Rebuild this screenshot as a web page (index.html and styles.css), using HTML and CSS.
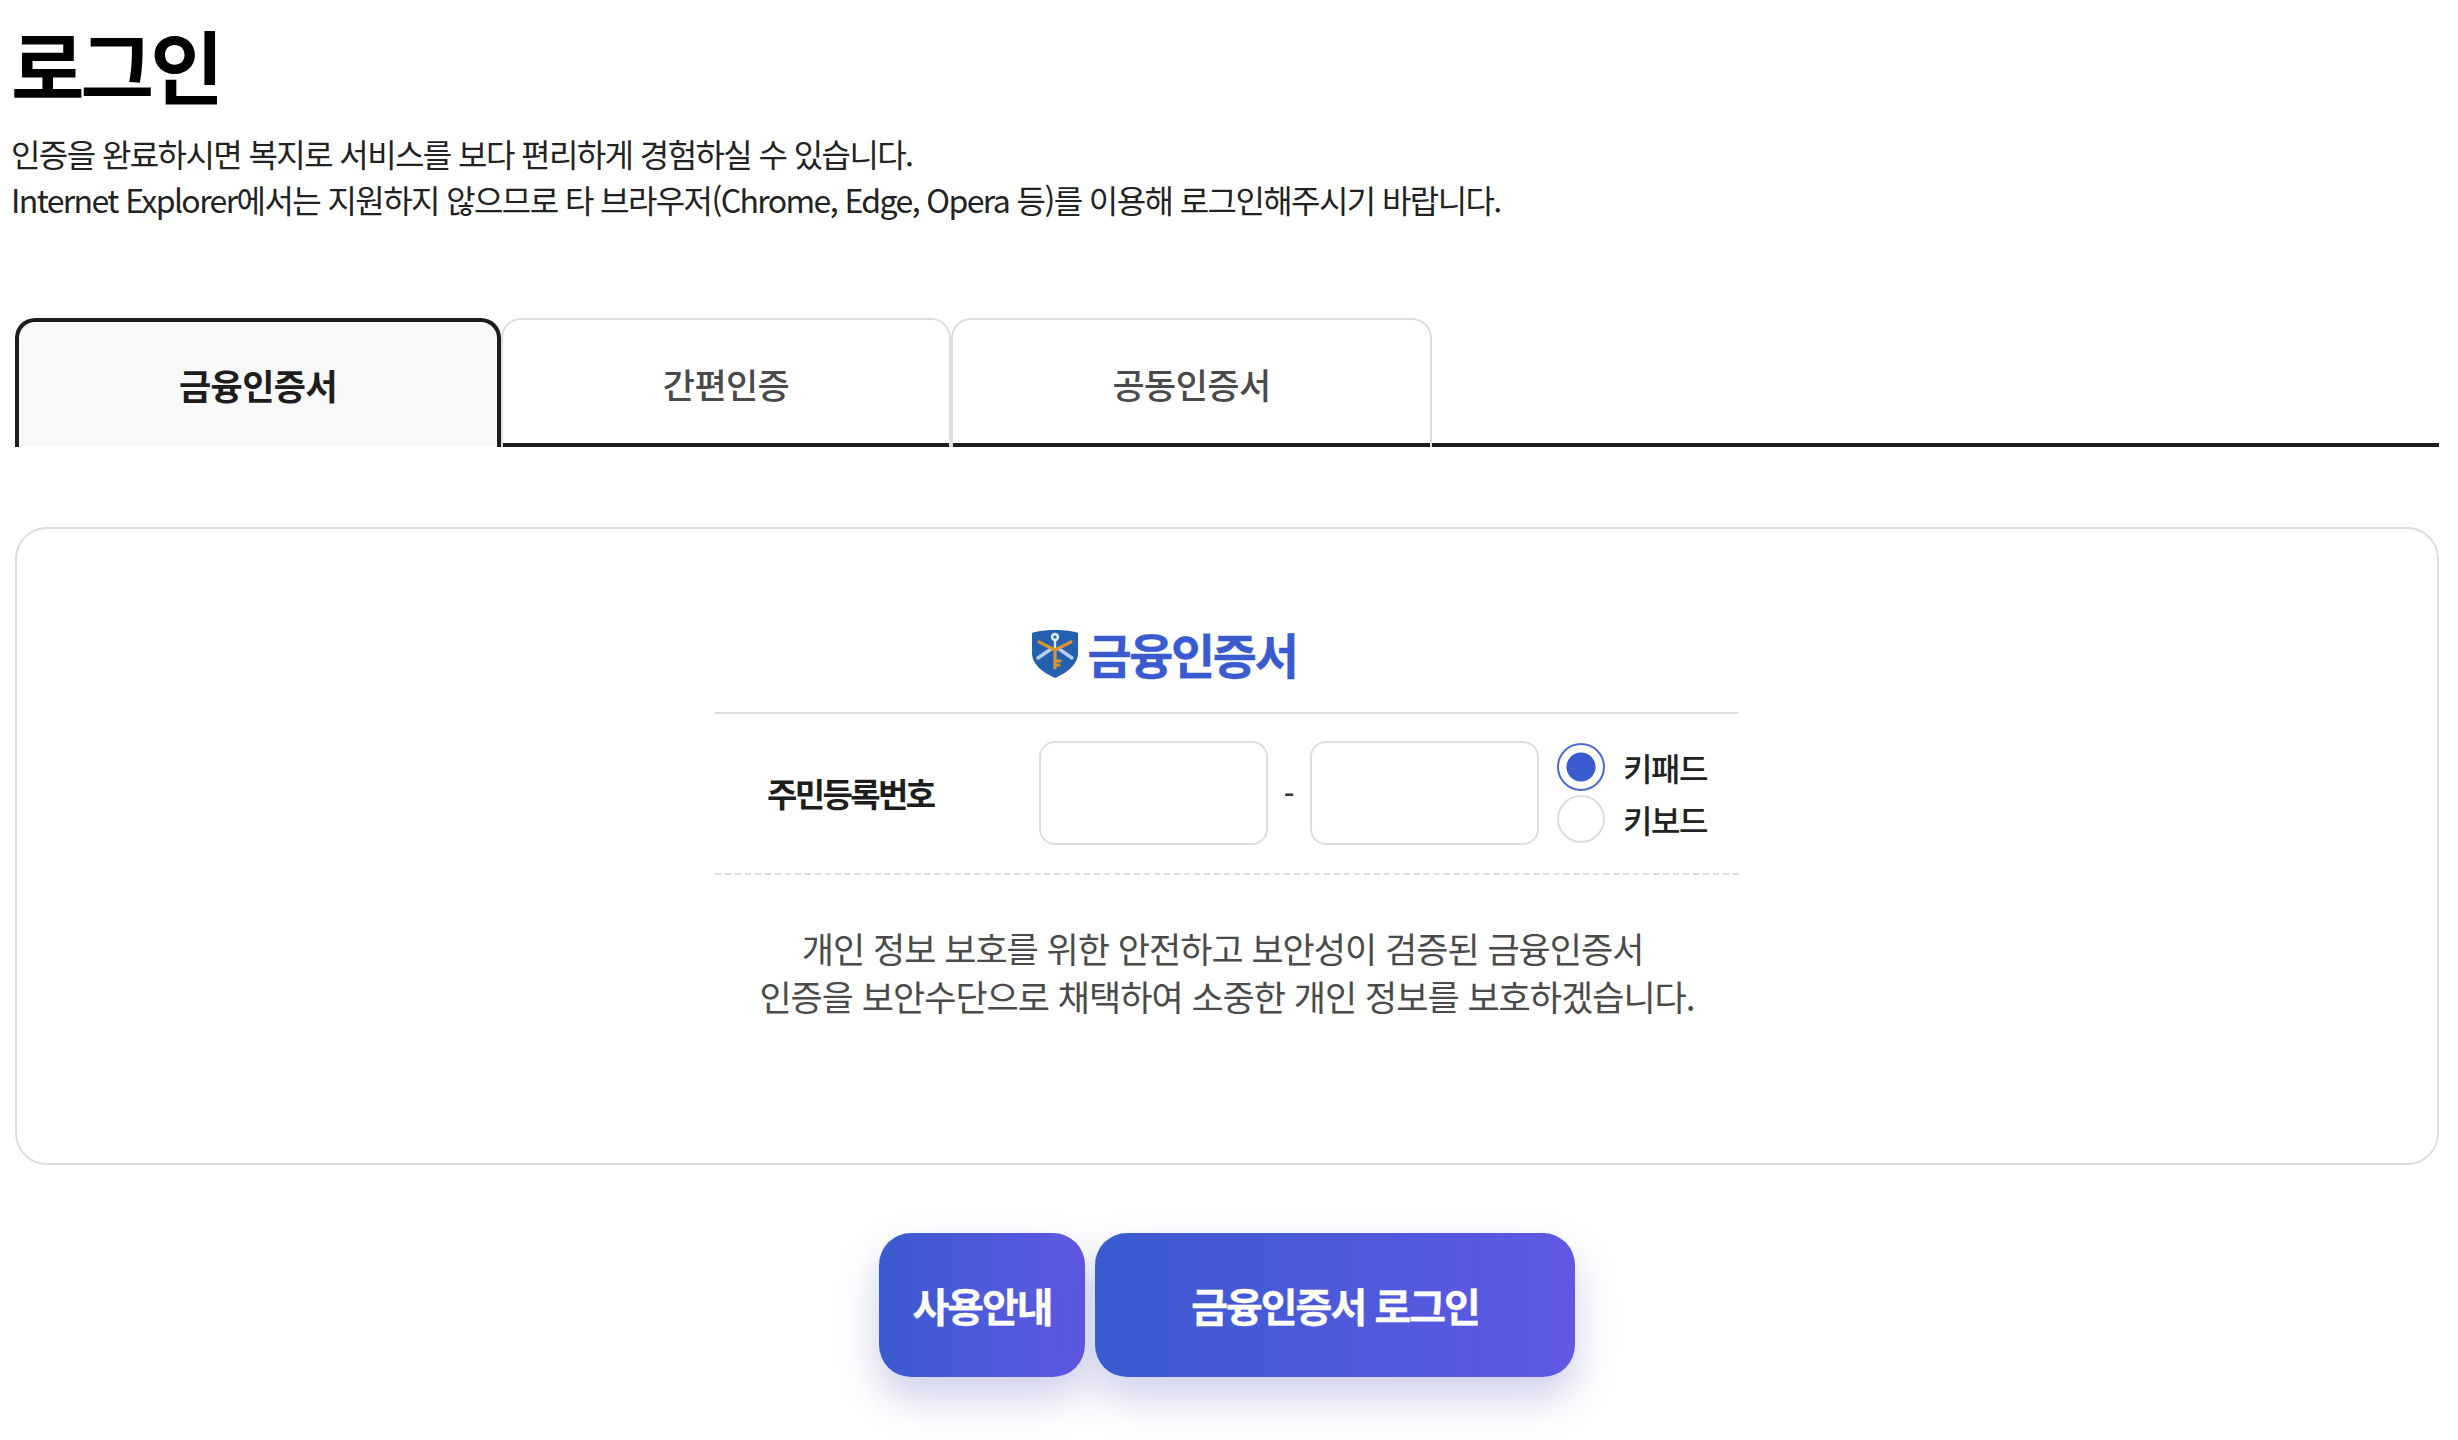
FILE: index.html
```html
<!DOCTYPE html>
<html lang="ko">
<head>
    <meta charset="UTF-8">
    <meta name="viewport" content="width=device-width, initial-scale=1.0">
    <title>로그인</title>
    <link rel="stylesheet" href="styles.css">
</head>
<body>
    <div class="container">
        <div class="intro">
            <h1>로그인</h1>
            <p>인증을 완료하시면 복지로 서비스를 보다 편리하게 경험하실 수 있습니다.<br>Internet Explorer에서는 지원하지 않으므로 타 브라우저(Chrome, Edge, Opera 등)를 이용해 로그인해주시기 바랍니다.</p>
        </div>

        <ul class="tabs">
            <li class="tab tab-first active">금융인증서</li>
            <li class="tab tab-second">간편인증</li>
            <li class="tab tab-third">공동인증서</li>
        </ul>

        <div class="panel">
            <div class="panel-title">
                <svg class="shield" viewBox="0 0 48 50" aria-hidden="true">
                    <path d="M1 5 C10 1 38 1 47 5 L47 25 C47 37 35 45 24 50 C13 45 1 37 1 25 Z" fill="#2460ad"/>
                    <path d="M7 30 L20 21 M41 30 L28 21" stroke="#b9d0ea" stroke-width="3.4" stroke-linecap="round"/>
                    <circle cx="24" cy="9" r="4.2" fill="#dbe7f4"/>
                    <circle cx="24" cy="9" r="1.6" fill="#2460ad"/>
                    <path d="M24 13 L24 21" stroke="#dbe7f4" stroke-width="2.4"/>
                    <path d="M8 14 L24 22 L40 14 M24 22 L24 40 M24 33 L29 33 M24 37 L28 37" fill="none" stroke="#d9952f" stroke-width="3.2" stroke-linecap="round"/>
                </svg>
                <span>금융인증서</span>
            </div>

            <div class="id-row">
                <label class="id-label" for="idFront">주민등록번호</label>
                <div class="id-fields">
                    <input type="text" id="idFront" class="id-input">
                    <span class="id-dash">-</span>
                    <input type="password" id="idBack" class="id-input">
                </div>
                <div class="input-type">
                    <label class="radio-item"><span class="radio checked"></span>키패드</label>
                    <label class="radio-item"><span class="radio"></span>키보드</label>
                </div>
            </div>

            <p class="panel-text">개인 정보 보호를 위한 안전하고 보안성이 검증된 금융인증서&nbsp;<br>인증을 보안수단으로 채택하여 소중한 개인 정보를 보호하겠습니다.</p>
        </div>

        <div class="buttons">
            <button type="button" class="btn btn-guide">사용안내</button>
            <button type="button" class="btn btn-login">금융인증서 로그인</button>
        </div>
    </div>
</body>
</html>
```

FILE: styles.css
```css
* {
    box-sizing: border-box;
}
body {
    margin: 0;
    background: #fff;
    color: #1d1d1d;
    font-family: "Noto Sans CJK KR", "Noto Sans", sans-serif;
}
.container {
    padding: 0 19px 64px 15px;
}
.intro {
    margin-left: -4px;
}
h1 {
    margin: 0;
    padding-top: 7px;
    font-size: 80px;
    line-height: 112px;
    font-weight: 700;
    letter-spacing: -4px;
    color: #000;
}
.intro p {
    margin: 11px 0 0;
    font-size: 32px;
    line-height: 46px;
    letter-spacing: -1.6px;
    color: #222;
}
.tabs {
    display: flex;
    margin: 96px 0 0;
    padding: 0;
    height: 129px;
    list-style: none;
    border-bottom: 4px solid #1d1d1d;
}
.tab {
    display: flex;
    justify-content: center;
    align-items: center;
    height: 129px;
    border: 2px solid #ddd;
    border-bottom: none;
    border-radius: 20px 20px 0 0;
    font-size: 35px;
    font-weight: 500;
    letter-spacing: -0.6px;
    color: #4a4a4a;
}
.tab-first {
    width: 486px;
}
.tab-second {
    width: 450px;
}
.tab-third {
    width: 481px;
}
.tab.active {
    border: 4px solid #1d1d1d;
    border-bottom: none;
    background: #f8f8f8;
    font-weight: 700;
    color: #1d1d1d;
}
.panel {
    margin-top: 80px;
    height: 638px;
    padding-top: 97px;
    border: 2px solid #ddd;
    border-radius: 32px;
}
.panel-title {
    display: flex;
    justify-content: center;
    align-items: center;
    gap: 9px;
    margin: 0 auto;
    width: 1024px;
    height: 88px;
    padding: 0 127px 32px 0;
    border-bottom: 2px solid #ddd;
    color: #3a5bcf;
    font-size: 48px;
    font-weight: 700;
    letter-spacing: -2.4px;
    -webkit-text-stroke: 0.4px #3a5bcf;
}
.shield {
    width: 48px;
    height: 50px;
}
.id-row {
    display: flex;
    align-items: center;
    margin: 0 auto;
    width: 1024px;
    height: 161px;
    padding-bottom: 2px;
    border-bottom: 2px dashed #ddd;
}
.id-label {
    width: 324px;
    padding-left: 52px;
    font-size: 33px;
    font-weight: 700;
    letter-spacing: -2.6px;
    color: #1d1d1d;
}
.id-fields {
    display: flex;
    align-items: center;
}
.id-input {
    width: 229px;
    height: 104px;
    border: 2px solid #ddd;
    border-radius: 16px;
    background: #fff;
    outline: none;
}
.id-dash {
    width: 42px;
    text-align: center;
    font-size: 30px;
    font-weight: 500;
    color: #333;
}
.input-type {
    display: flex;
    flex-direction: column;
    gap: 3px;
    margin-left: 18px;
}
.radio-item {
    display: flex;
    align-items: center;
    gap: 18px;
    height: 49px;
    font-size: 32px;
    font-weight: 500;
    letter-spacing: -1.4px;
    color: #222;
}
.radio {
    width: 48px;
    height: 48px;
    border: 2px solid #ddd;
    border-radius: 50%;
    background: #fff;
}
.radio.checked {
    border: 2px solid #4d6bd6;
    background: radial-gradient(circle, #3a5bcf 0, #3a5bcf 14px, #fff 15px);
}
.panel-text {
    margin: 49px 0 0;
    text-align: center;
    font-size: 35px;
    line-height: 48px;
    letter-spacing: -1px;
    color: #4a4a4a;
}
.buttons {
    display: flex;
    justify-content: center;
    gap: 10px;
    margin-top: 68px;
}
.btn {
    height: 144px;
    border: none;
    border-radius: 32px;
    background: linear-gradient(90deg, #3a5bcf, #6058e3);
    box-shadow: 0 20px 40px rgba(58, 60, 170, 0.25);
    color: #fff;
    font-family: inherit;
    font-size: 40px;
    font-weight: 700;
    letter-spacing: -2px;
    -webkit-text-stroke: 0.4px #fff;
}
.btn-guide {
    width: 206px;
}
.btn-login {
    width: 480px;
}
```
